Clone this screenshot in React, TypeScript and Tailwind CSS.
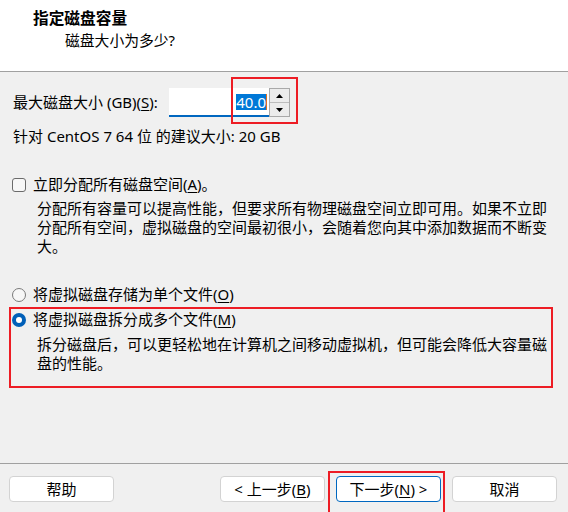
import type { ReactNode } from 'react';

const U = ({ children }: { children: ReactNode }) => (
  <span className="underline decoration-1 underline-offset-[2px]">{children}</span>
);

const DlgButton = ({ children, primary = false }: { children: ReactNode; primary?: boolean }) => (
  <button
    className={`h-[26px] w-[105px] rounded-[4px] border bg-white text-[15px] leading-[19px] text-black ${
      primary ? 'border-[#0067c0]' : 'border-[#d3d3d3]'
    }`}
  >
    {children}
  </button>
);

const Radio = ({ checked = false }: { checked?: boolean }) =>
  checked ? (
    <span className="flex h-[14px] w-[14px] shrink-0 items-center justify-center rounded-full bg-[#005fb8]">
      <span className="h-[6px] w-[6px] rounded-full bg-white" />
    </span>
  ) : (
    <span className="h-[14px] w-[14px] shrink-0 rounded-full border border-[#7a7a7a] bg-[#f7f7f7]" />
  );

const Arrow = ({ up }: { up: boolean }) => (
  <svg width="7" height="4" viewBox="0 0 7 4">
    <path d={up ? 'M0 4 L3.5 0 L7 4 Z' : 'M0 0 L3.5 4 L7 0 Z'} fill="#000" />
  </svg>
);

export default function App() {
  return (
    <div className="flex h-[512px] w-[568px] flex-col bg-[#f0f0f0] font-['Noto_Sans','Noto_Sans_CJK_SC',sans-serif] text-black">
      {/* header */}
      <div className="h-[72px] border-b border-[#a0a0a0] bg-white pt-[9px]">
        <div className="pl-[33px] text-[15.7px] font-bold leading-[19px]">指定磁盘容量</div>
        <div className="mt-[3px] pl-[65px] text-[14.8px] leading-[19px]">磁盘大小为多少?</div>
      </div>

      {/* body */}
      <div className="flex-1 text-[15px] leading-[19px]">
        <div className="mt-[16px] flex h-[29px] items-center">
          <span className="w-[169px] pl-[13px]">
            最大磁盘大小 (GB)(<U>S</U>):
          </span>
          <div className="relative flex h-[29px]">
            <div className="flex w-[100px] items-center justify-end border-b-2 border-[#0067c0] bg-white pr-[2px]">
              <span className="bg-[#0078d7] leading-[16px] text-white">40.0</span>
              <span className="h-[16px] w-px bg-[#e07020]" />
            </div>
            <div className="flex w-[21px] flex-col border border-[#a9a9a9] bg-[#ececec]">
              <div className="flex flex-1 items-center justify-center border-b border-[#bdbdbd]">
                <Arrow up />
              </div>
              <div className="flex flex-1 items-center justify-center">
                <Arrow up={false} />
              </div>
            </div>
            <div className="pointer-events-none absolute -bottom-[7px] -right-[8px] -top-[11px] left-[62px] border-2 border-[#ed1c24]" />
          </div>
        </div>

        <div className="mt-[10px] pl-[13px]">针对 CentOS 7 64 位 的建议大小: 20 GB</div>

        <div className="mt-[29px] flex items-center gap-[7px] pl-[12px]">
          <span className="h-[14px] w-[14px] shrink-0 rounded-[3px] border border-[#6b6b6b] bg-[#f7f7f7]" />
          <span>
            立即分配所有磁盘空间(<U>A</U>)。
          </span>
        </div>
        <p className="mt-[5px] w-[553px] pl-[37px]">
          分配所有容量可以提高性能，但要求所有物理磁盘空间立即可用。如果不立即分配所有空间，虚拟磁盘的空间最初很小，会随着您向其中添加数据而不断变大。
        </p>

        <div className="mt-[29px] flex items-center gap-[7px] pl-[12px]">
          <Radio />
          <span>
            将虚拟磁盘存储为单个文件(<U>O</U>)
          </span>
        </div>

        <div className="relative mt-[6px]">
          <div className="flex items-center gap-[7px] pl-[12px]">
            <Radio checked />
            <span>
              将虚拟磁盘拆分成多个文件(<U>M</U>)
            </span>
          </div>
          <p className="mt-[6px] w-[553px] pl-[37px]">
            拆分磁盘后，可以更轻松地在计算机之间移动虚拟机，但可能会降低大容量磁盘的性能。
          </p>
          <div className="pointer-events-none absolute -bottom-[15px] -top-[3px] left-[9px] right-[15px] border-2 border-[#ed1c24]" />
        </div>
      </div>

      {/* footer */}
      <div className="flex h-[49px] border-t border-[#a0a0a0] pt-[12px]">
        <div className="ml-[9px]">
          <DlgButton>帮助</DlgButton>
        </div>
        <div className="ml-auto mr-[11px] flex gap-[11px]">
          <DlgButton>
            &lt; 上一步(<U>B</U>)
          </DlgButton>
          <div className="relative">
            <DlgButton primary>
              下一步(<U>N</U>) &gt;
            </DlgButton>
            <div className="pointer-events-none absolute -bottom-[8px] -left-[8px] -right-[4px] -top-[5px] border-2 border-[#ed1c24]" />
          </div>
          <DlgButton>取消</DlgButton>
        </div>
      </div>
    </div>
  );
}
